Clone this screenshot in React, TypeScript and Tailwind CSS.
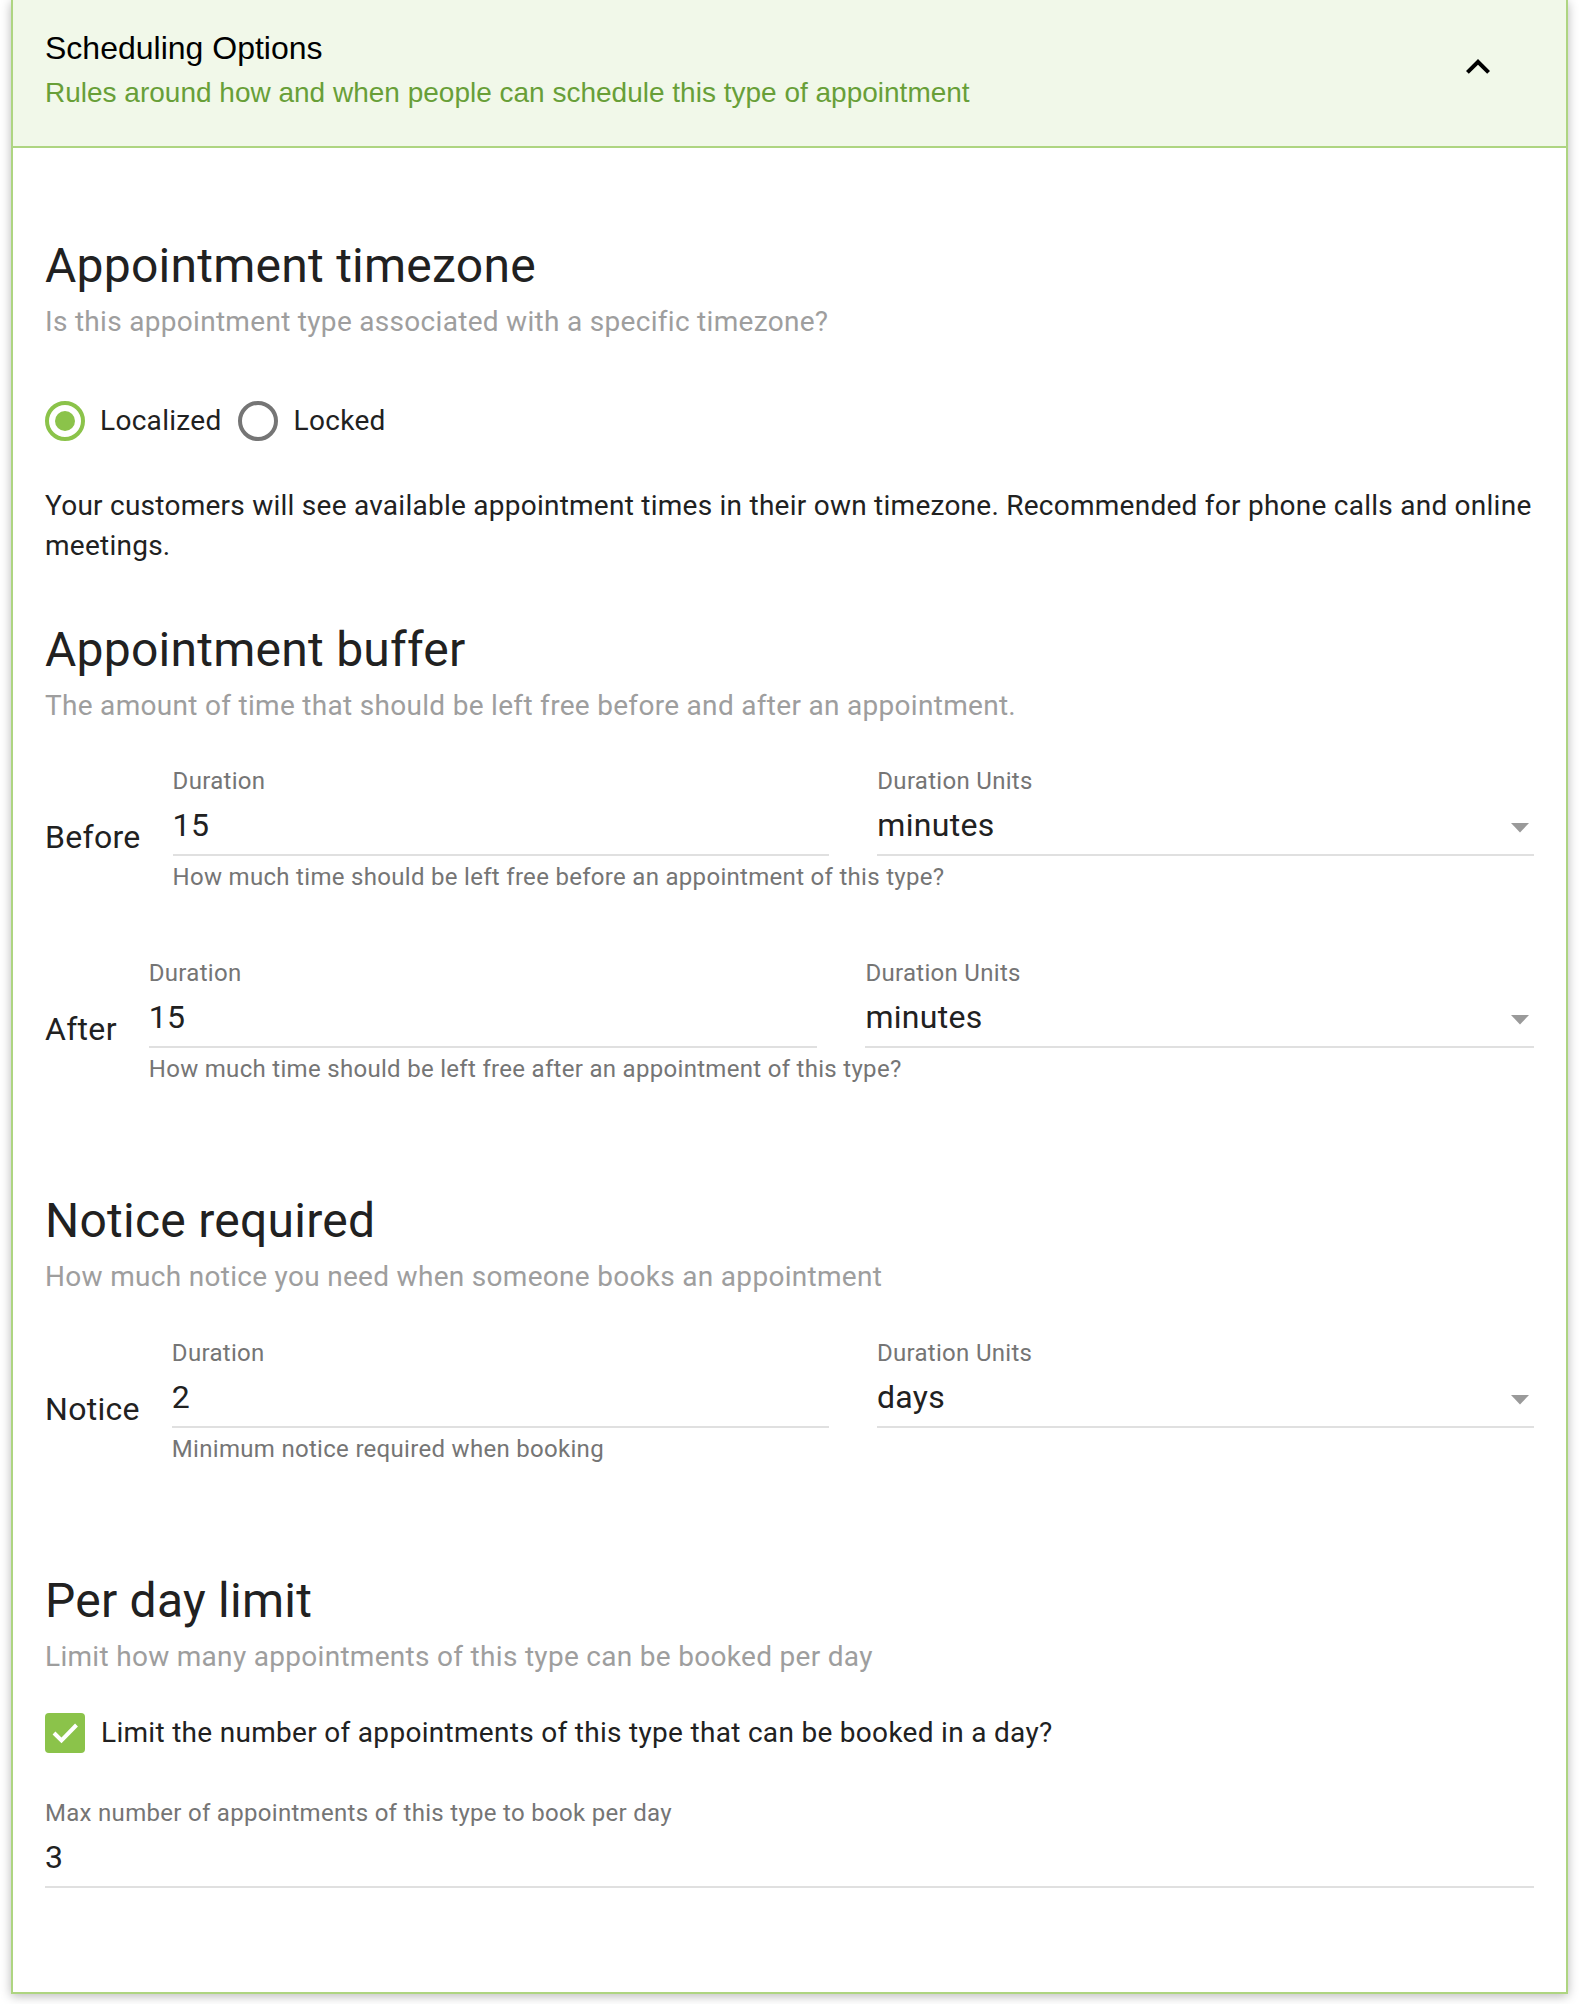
import React from "react";

const roboto = { fontFamily: "Roboto, 'Noto Sans', sans-serif" } as const;

function SectionHead({ title, sub }: { title: string; sub: string }) {
  return (
    <>
      <h2 className="text-[48px] leading-[56px] font-normal text-[#212121] tracking-[0.25px]">{title}</h2>
      <p className="mt-[10px] text-[28px] leading-[36px] text-[#9e9e9e]">{sub}</p>
    </>
  );
}

function Field({ label, value, helper, select }: { label: string; value: string; helper?: string; select?: boolean }) {
  return (
    <div className="flex-1 min-w-0">
      <div className="text-[24px] leading-[28px] text-[#757575]">{label}</div>
      <div className="mt-[10px] flex items-center justify-between border-b-2 border-[#e0e0e0] pb-[9px]">
        <span className="text-[32px] leading-[40px] text-[#212121]">{value}</span>
        {select && (
          <svg width="18" height="10" viewBox="0 0 18 10" className="mr-[5px] mt-[6px]">
            <polygon points="0,0 18,0 9,9.5" fill="#9a9a9a" />
          </svg>
        )}
      </div>
      {helper !== undefined && (
        <div className="mt-[7px] h-[28px] whitespace-nowrap text-[24px] leading-[28px] text-[#757575]">{helper}</div>
      )}
    </div>
  );
}

function Row({ label, helper, value, unit, className }: { label: string; helper: string; value: string; unit: string; className: string }) {
  return (
    <div className={"flex gap-8 " + className}>
      <div className="pt-[50px] text-[32px] leading-[40px] text-[#212121]">{label}</div>
      <div className="flex flex-1 gap-12">
        <Field label="Duration" value={value} helper={helper} />
        <Field label="Duration Units" value={unit} helper="" select />
      </div>
    </div>
  );
}

export default function App() {
  return (
    <div className="min-h-[2004px] bg-white pl-[11px] pr-[12px] pb-[10px]">
      <div className="border-x-2 border-b-2 border-[#aed581] bg-white shadow-[0_2px_10px_rgba(0,0,0,0.28)]">
        <div
          className="flex items-center justify-between border-b-2 border-[#aed581] bg-[#f1f8e9] pl-8 pt-[30px] pb-[37px]"
          style={{ fontFamily: "'Liberation Sans', Arial, sans-serif" }}
        >
          <div>
            <div className="text-[32px] leading-[36px] text-black">Scheduling Options</div>
            <div className="mt-[11px] text-[28px] leading-[32px] text-[#689f38]">
              Rules around how and when people can schedule this type of appointment
            </div>
          </div>
          <svg width="48" height="48" viewBox="0 0 24 24" className="mr-[64px] -mt-[6px]">
            <path d="M12 8l-6 6 1.41 1.41L12 10.83l4.59 4.58L18 14z" fill="#000" />
          </svg>
        </div>

        <div className="px-8 pt-[90px] pb-[104px] tracking-[0.3px]" style={roboto}>
          <SectionHead
            title="Appointment timezone"
            sub="Is this appointment type associated with a specific timezone?"
          />
          <div className="mt-[61px] flex h-[40px] items-center">
            <span className="flex h-[40px] w-[40px] items-center justify-center rounded-full border-4 border-[#8bc34a]">
              <span className="h-[20px] w-[20px] rounded-full bg-[#8bc34a]" />
            </span>
            <span className="ml-[15px] text-[28px] leading-[40px] text-[#212121]">Localized</span>
            <span className="ml-[16px] h-[40px] w-[40px] rounded-full border-4 border-[#757575]" />
            <span className="ml-[16px] text-[28px] leading-[40px] text-[#212121]">Locked</span>
          </div>
          <p className="-mr-2 mt-[45px] text-[28px] leading-[40px] tracking-[0.25px] text-[#212121]">
            Your customers will see available appointment times in their own timezone. Recommended for phone calls
            and online meetings.
          </p>

          <div className="mt-[56px]">
            <SectionHead
              title="Appointment buffer"
              sub="The amount of time that should be left free before and after an appointment."
            />
          </div>
          <Row
            className="mt-[43px]"
            label="Before"
            value="15"
            unit="minutes"
            helper="How much time should be left free before an appointment of this type?"
          />
          <Row
            className="mt-[68px]"
            label="After"
            value="15"
            unit="minutes"
            helper="How much time should be left free after an appointment of this type?"
          />

          <div className="mt-[110px]">
            <SectionHead title="Notice required" sub="How much notice you need when someone books an appointment" />
          </div>
          <Row className="mt-[44px]" label="Notice" value="2" unit="days" helper="Minimum notice required when booking" />

          <div className="mt-[110px]">
            <SectionHead title="Per day limit" sub="Limit how many appointments of this type can be booked per day" />
          </div>
          <div className="mt-[38px] flex h-[40px] items-center">
            <span className="flex h-[40px] w-[40px] items-center justify-center rounded-[4px] bg-[#8bc34a]">
              <svg width="40" height="40" viewBox="0 0 40 40">
                <polyline points="9,20 16.5,27.5 31.5,12" fill="none" stroke="#fff" strokeWidth="4" />
              </svg>
            </span>
            <span className="ml-[16px] text-[28px] leading-[40px] text-[#212121]">
              Limit the number of appointments of this type that can be booked in a day?
            </span>
          </div>
          <div className="mt-[46px]">
            <Field label="Max number of appointments of this type to book per day" value="3" />
          </div>
        </div>
      </div>
    </div>
  );
}
